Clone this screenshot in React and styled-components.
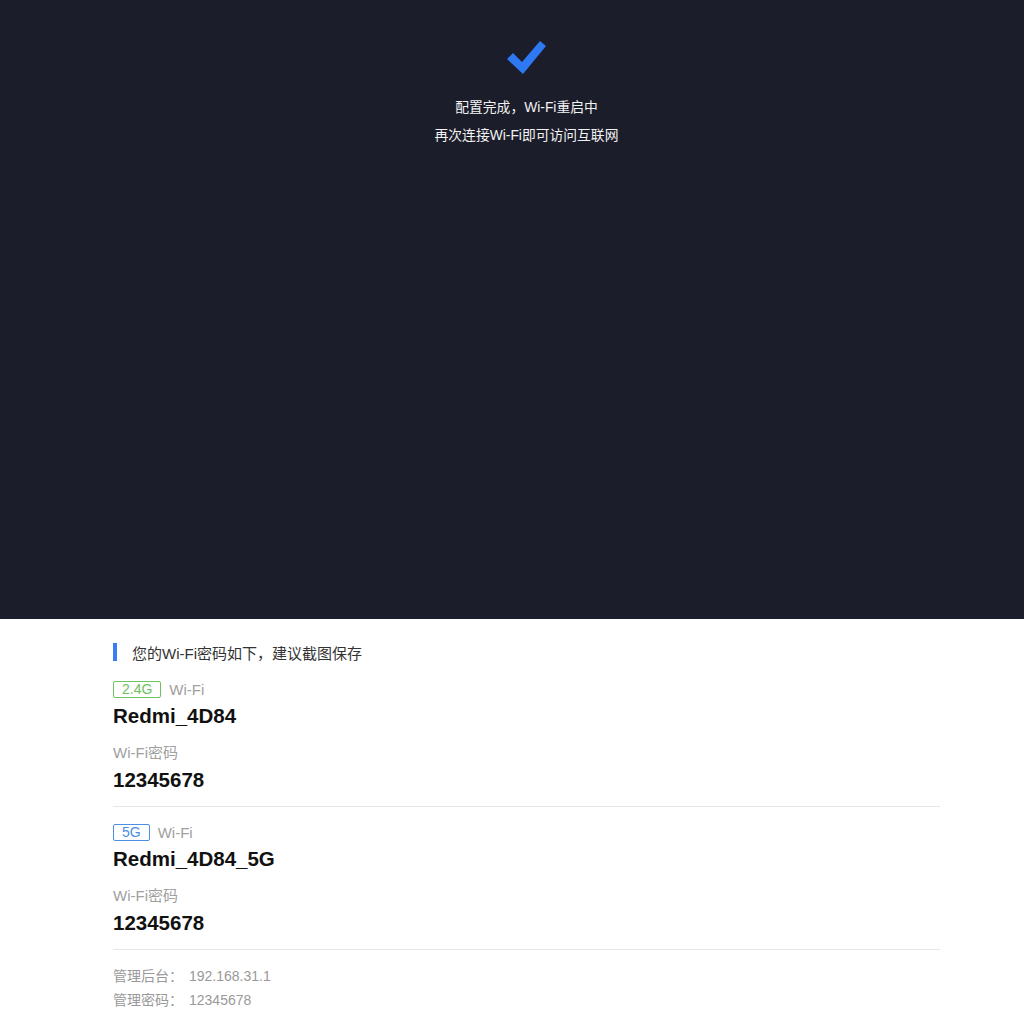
import React from 'react';
import styled, { createGlobalStyle } from 'styled-components';

const GlobalStyle = createGlobalStyle`
    html, body {
        margin: 0;
        padding: 0;
        overflow-x: hidden;
        background: #ffffff;
    }
    body {
        font-family: "Liberation Sans", Arial, "Noto Sans CJK SC", sans-serif;
    }
`;

const Page = styled.div`
    width: 1053px;
`;

const Hero = styled.div`
    height: 619px;
    background: #1b1d2a;
    display: flex;
    flex-direction: column;
    align-items: center;
    padding-top: 40px;
    box-sizing: border-box;
    color: #ffffff;
`;

const CheckIcon = styled.svg`
    width: 40px;
    height: 36px;
    margin-bottom: 18px;
`;

const HeroLine = styled.p`
    margin: 0;
    font-size: 13.8px;
    line-height: 28px;
    color: #f2f2f2;
`;

const Content = styled.div`
    padding: 23px 113px 0;
`;

const SectionTitle = styled.div`
    display: flex;
    align-items: center;
    gap: 15px;
    font-size: 15px;
    color: #333333;
    height: 20px;
    margin-bottom: 17px;

    &::before {
        content: '';
        width: 4px;
        height: 18px;
        background: #3b7cf3;
    }
`;

const Network = styled.div`
    border-bottom: 1px solid #e6e6e6;
    padding-bottom: 13px;
    margin-bottom: 15px;
`;

const BandRow = styled.div`
    display: flex;
    align-items: center;
    gap: 8px;
    height: 20px;
`;

const Tag = styled.span`
    display: inline-flex;
    align-items: center;
    justify-content: center;
    height: 15px;
    padding: 0 8px;
    border: 1px solid ${({ $color }) => $color};
    border-radius: 2px;
    color: ${({ $color }) => $color};
    font-size: 14px;
`;

const Label = styled.span`
    font-size: 15px;
    color: #a0a0a0;
`;

const Value = styled.div`
    font-size: 20.5px;
    font-weight: 700;
    color: #111111;
    line-height: 26px;
    margin-top: 4px;
    margin-bottom: ${({ $gap }) => $gap || 0}px;
`;

const FieldLabel = styled.div`
    font-size: 15px;
    color: #a0a0a0;
    line-height: 20px;
`;

const AdminList = styled.div`
    margin-top: -1px;
`;

const AdminRow = styled.div`
    display: flex;
    font-size: 14px;
    color: #999999;
    line-height: 24px;
`;

const AdminKey = styled.span`
    width: 76px;
`;

const networks = [
    { band: '2.4G', color: '#6cc35f', ssid: 'Redmi_4D84', password: '12345678' },
    { band: '5G', color: '#4a8ee6', ssid: 'Redmi_4D84_5G', password: '12345678' }
];

export default function App() {
    return (
        <>
            <GlobalStyle />
            <Page>
                <Hero>
                    <CheckIcon viewBox="0 0 40 36">
                        <polygon points="0,19 6,13 15,22 33,1 39,6 16,34" fill="#2f78f4" />
                    </CheckIcon>
                    <HeroLine>配置完成，Wi-Fi重启中</HeroLine>
                    <HeroLine>再次连接Wi-Fi即可访问互联网</HeroLine>
                </Hero>
                <Content>
                    <SectionTitle>您的Wi-Fi密码如下，建议截图保存</SectionTitle>
                    {networks.map((n) => (
                        <Network key={n.band}>
                            <BandRow>
                                <Tag $color={n.color}>{n.band}</Tag>
                                <Label>Wi-Fi</Label>
                            </BandRow>
                            <Value $gap={14}>{n.ssid}</Value>
                            <FieldLabel>Wi-Fi密码</FieldLabel>
                            <Value>{n.password}</Value>
                        </Network>
                    ))}
                    <AdminList>
                        <AdminRow>
                            <AdminKey>管理后台：</AdminKey>
                            <span>192.168.31.1</span>
                        </AdminRow>
                        <AdminRow>
                            <AdminKey>管理密码：</AdminKey>
                            <span>12345678</span>
                        </AdminRow>
                    </AdminList>
                </Content>
            </Page>
        </>
    );
}
